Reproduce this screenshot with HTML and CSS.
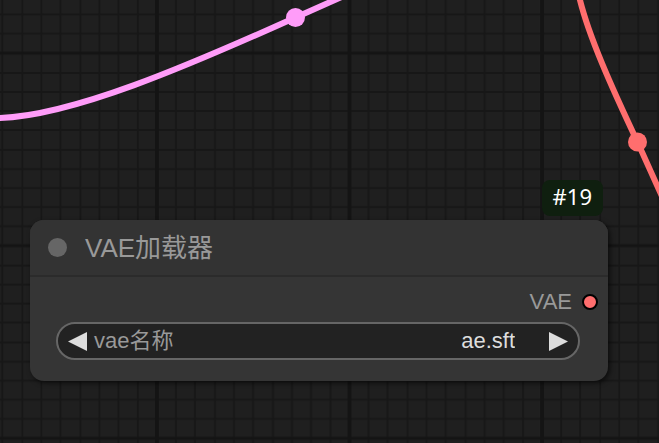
FILE: index.html
```html
<!DOCTYPE html>
<html lang="zh-CN">
<head>
<meta charset="utf-8">
<title>VAE加载器</title>
<link rel="stylesheet" href="styles.css">
</head>
<body>
<main class="canvas">
  <svg class="backdrop" aria-hidden="true">
    <defs>
      <pattern id="grid" x="156.9" y="53.1" width="192.6" height="192.6" patternUnits="userSpaceOnUse">
        <path class="minor" d="M19.1 0V193M38.1 0V193M58.1 0V193M77.1 0V193M96.1 0V193M116.1 0V193M135.1 0V193M154.1 0V193M173.6 0V193M0 19.9H193M0 38.9H193M0 57.9H193M0 76.9H193M0 96.9H193M0 115.9H193M0 134.9H193M0 153.9H193M0 173.2H193"/>
        <path class="major" d="M0 0V193M192.6 0V193"/>
        <path class="major-row" d="M0 0H193M0 192.6H193"/>
      </pattern>
    </defs>
    <rect width="100%" height="100%" fill="url(#grid)"/>
    <g class="link link-model">
      <path d="M-2 118C70 117 190 65 295.500 17.500L346 -5"/>
      <circle cx="295.500" cy="17.500" r="9.500"/>
    </g>
    <g class="link link-vae">
      <path d="M579 -4C588 35 612 88 637.500 142L665 203"/>
      <circle cx="637.500" cy="142" r="9.500"/>
    </g>
  </svg>

  <article class="node">
    <span class="badge">#19</span>
    <header class="node-header">
      <span class="dot"></span>
      <h1 class="node-title">VAE加载器</h1>
    </header>
    <div class="node-body">
      <div class="output">
        <span>VAE</span>
        <span class="port"></span>
      </div>
      <div class="widget">
        <button class="step" type="button" aria-label="上一个">
          <svg class="arrow" viewBox="0 0 19 19"><path d="M0 9.500L19 0V19Z"/></svg>
        </button>
        <label class="widget-label" for="vae-name">vae名称</label>
        <select class="widget-value" id="vae-name">
          <option>ae.sft</option>
        </select>
        <button class="step" type="button" aria-label="下一个">
          <svg class="arrow" viewBox="0 0 19 19"><path d="M19 9.500L0 0V19Z"/></svg>
        </button>
      </div>
    </div>
  </article>
</main>
</body>
</html>
```
FILE: styles.css
```css
* {
  box-sizing: border-box;
}

body {
  margin: 0;
  background: #1f1f1f;
  font-family: "Liberation Sans", "Noto Sans CJK SC", sans-serif;
}

.canvas {
  position: relative;
  min-height: 100vh;
  overflow: hidden;
}

.backdrop {
  position: absolute;
  inset: 0;
  width: 100%;
  height: 100%;
}

.minor {
  stroke: #171717;
  stroke-width: 2;
}

.major,
.major-row {
  stroke: #141414;
  stroke-width: 4;
}

.major-row {
  stroke-width: 3;
}

.link path {
  fill: none;
  stroke-width: 6;
}

.link-model {
  fill: #ff9cf9;
  stroke: #ff9cf9;
}

.link-vae {
  fill: #ff6e6e;
  stroke: #ff6e6e;
}

.link circle {
  stroke: none;
}

.node {
  position: absolute;
  top: 220px;
  left: 30px;
  right: 51px;
  border-radius: 14px;
  background: #353535;
  color: #999;
  box-shadow: 2px 2px 5px rgba(0, 0, 0, 0.6);
}

.badge {
  position: absolute;
  right: 5px;
  bottom: 100%;
  margin-bottom: 4px;
  padding: 0 11px 4px;
  border-radius: 8px;
  background: #0f1f0f;
  color: #fff;
  font-family: "Noto Sans", sans-serif;
  font-size: 22px;
  line-height: 32px;
}

.node-header {
  display: flex;
  align-items: center;
  gap: 18px;
  height: 57px;
  padding: 0 18px;
  border-bottom: 2px solid #2b2b2b;
  border-radius: 14px 14px 0 0;
  background: #333;
}

.dot {
  width: 19px;
  height: 19px;
  border-radius: 50%;
  background: #666;
}

.node-title {
  margin: 0;
  font-size: 26px;
  font-weight: 400;
  line-height: 32px;
}

.node-body {
  padding: 12px 10px 21px;
}

.output {
  display: flex;
  align-items: center;
  justify-content: flex-end;
  gap: 10px;
  font-size: 22px;
  line-height: 26px;
}

.port {
  width: 16px;
  height: 16px;
  border: 2px solid #000;
  border-radius: 50%;
  background: #ff6e6e;
}

.widget {
  display: flex;
  align-items: center;
  height: 38px;
  margin: 7px 18px 0 16px;
  padding: 0 10px;
  border: 2px solid #666;
  border-radius: 19px;
  background: #222;
  font-size: 22px;
}

.step {
  display: flex;
  padding: 0;
  border: 0;
  background: none;
}

.arrow {
  width: 19px;
  height: 19px;
  fill: #ddd;
}

.widget-label {
  margin-left: 7px;
  line-height: 34px;
}

.widget-value {
  flex: 1;
  margin-right: 34px;
  padding: 0;
  border: 0;
  background: none;
  color: #ddd;
  font: inherit;
  line-height: 34px;
  text-align-last: right;
  appearance: none;
}
```
